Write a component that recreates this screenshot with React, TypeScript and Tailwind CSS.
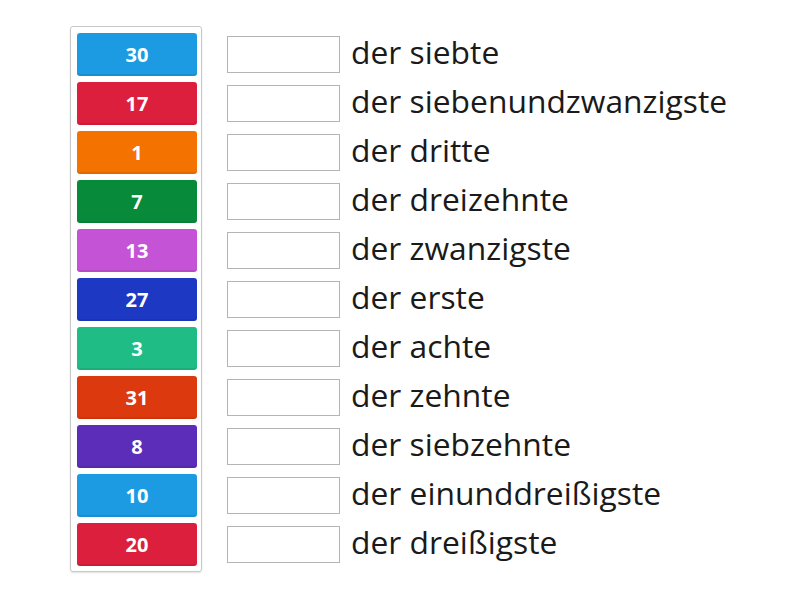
import React from 'react';

const tiles = [
  { n: '30', c: 'bg-[#1d9be2]' },
  { n: '17', c: 'bg-[#dc1f3c]' },
  { n: '1', c: 'bg-[#f47300]' },
  { n: '7', c: 'bg-[#088a3b]' },
  { n: '13', c: 'bg-[#c553d6]' },
  { n: '27', c: 'bg-[#1d39c4]' },
  { n: '3', c: 'bg-[#1fbc86]' },
  { n: '31', c: 'bg-[#dc3a0e]' },
  { n: '8', c: 'bg-[#5c2db8]' },
  { n: '10', c: 'bg-[#1d9be2]' },
  { n: '20', c: 'bg-[#dc1f3c]' },
];

const words = [
  'der siebte',
  'der siebenundzwanzigste',
  'der dritte',
  'der dreizehnte',
  'der zwanzigste',
  'der erste',
  'der achte',
  'der zehnte',
  'der siebzehnte',
  'der einunddreißigste',
  'der dreißigste',
];

export default function App() {
  return (
    <div className="w-[800px] h-[600px] bg-white pl-[70px] pt-[26px] flex items-start gap-[25px] font-['Open_Sans',sans-serif]">
      {/* Tiles */}
      <div className="w-[132px] border border-[#c8c8c8] rounded-[3px] pt-[6px] pb-[5px] pl-[6px] pr-[4px] flex flex-col gap-[6px] shadow-[0_1px_2px_rgba(0,0,0,0.12)]">
        {tiles.map((t) => (
          <div
            key={t.n + t.c}
            className={`${t.c} h-[43px] rounded-[3px] flex items-center justify-center text-white font-bold text-[20px] shadow-[inset_0_-2px_0_rgba(0,0,0,0.08)]`}
          >
            {t.n}
          </div>
        ))}
      </div>

      {/* Answer rows */}
      <div className="flex flex-col gap-[6px] pt-[7px]">
        {words.map((w) => (
          <div key={w} className="h-[43px] flex items-center">
            <div className="w-[113px] h-[37px] border border-[#b4b4b4] bg-white" />
            <span className="ml-[11px] -mt-[6px] text-[31.8px] text-[#1a1a1a] leading-none whitespace-nowrap">{w}</span>
          </div>
        ))}
      </div>
    </div>
  );
}
